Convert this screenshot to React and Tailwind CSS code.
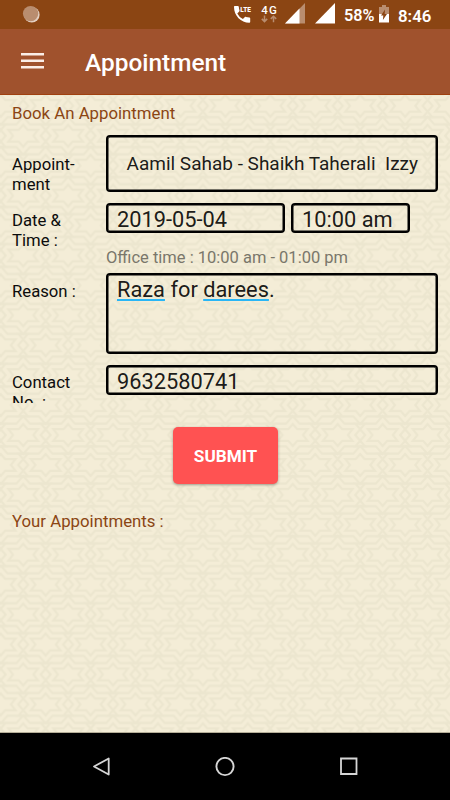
const reasonWords = [
  { text: 'Raza', misspelled: true },
  { text: ' for ' },
  { text: 'darees', misspelled: true },
  { text: '.' },
];

const outerStar = 'M0-19 6.8-11.3H27.2L17.5 0 27.2 11.3H6.8L0 19-6.8 11.3H-27.2L-17.5 0-27.2-11.3H-6.8Z';
const innerStar = 'M0-11 4.5-5.8H14.8L10.2 0 14.8 5.8H4.5L0 11-4.500 5.800H-14.800L-10.200 0-14.800-5.800H-4.500Z';

function Star({ x, y }) {
  return (
    <g transform={`translate(${x} ${y})`}>
      <path d={outerStar} />
      <path d={innerStar} />
    </g>
  );
}

function PatternBackground() {
  return (
    <svg className="absolute inset-0 h-full w-full" aria-hidden="true">
      <defs>
        <pattern id="stars" x="0.7" y="10.8" width="44.94" height="59.86" patternUnits="userSpaceOnUse">
          <g fill="none" stroke="#ece6cf" strokeWidth="2.2">
            <Star x={0} y={0} />
            <Star x={44.94} y={0} />
            <Star x={-22.47} y={29.93} />
            <Star x={22.47} y={29.93} />
            <Star x={67.41} y={29.93} />
            <Star x={0} y={59.86} />
            <Star x={44.94} y={59.86} />
          </g>
        </pattern>
      </defs>
      <rect width="100%" height="100%" fill="url(#stars)" />
    </svg>
  );
}

function StatusBar() {
  return (
    <div className="flex h-[29px] shrink-0 items-center bg-[#8b4513] pl-[22px] text-white">
      <svg className="mb-[2px] h-[18px] w-[18px] shrink-0" viewBox="0 0 18 18">
        <circle cx="9.8" cy="9.8" r="7.8" fill="#e3d0c2" />
        <circle cx="8.6" cy="8.6" r="7.7" fill="#b98d6f" />
      </svg>
      <svg className="mb-[1px] ml-[193px] h-[20px] w-[19px] shrink-0" viewBox="0 0 19 20" fill="#fff">
        <path d="M1.8 2h3.1c.5 0 .8.3.9.8.1 1.3.3 2.5.7 3.6.1.4 0 .8-.3 1L4.3 9.4a13 13 0 0 0 5.6 5.7l2-2c.3-.3.6-.4 1-.2 1.1.3 2.3.5 3.5.5.5 0 .8.4.8.9V18c0 .5-.4.8-.9.8C8 18.8 1 11.7 1 3c0-.5.3-1 .8-1z" />
        <text x="7.3" y="8" fontFamily="Roboto" fontWeight="900" fontSize="7.2" textLength="10.5" lengthAdjust="spacingAndGlyphs">LTE</text>
      </svg>
      <svg className="mb-[1px] ml-[8px] h-[22px] w-[18px] shrink-0" viewBox="0 0 18 22">
        <text x="1.3" y="10.5" fontFamily="Roboto" fontWeight="500" fontSize="11.5" textLength="15.5" fill="#fff">4G</text>
        <path d="M4.5 12.5v6M1.8 15.9l2.7 2.7 2.7-2.7M13.5 19.2v-6M10.8 15.9l2.7-2.7 2.7 2.7" fill="none" stroke="#b98d6f" strokeWidth="1.5" />
      </svg>
      <svg className="mb-[2px] ml-[7px] h-[21px] w-[20px] shrink-0" viewBox="0 0 20 21">
        <path d="M0 20.5 20 0V20.5Z" fill="#b98d6f" />
        <path d="M0 20.5 14.5 5.6V20.5Z" fill="#fff" />
      </svg>
      <svg className="mb-[2px] ml-[10px] h-[21px] w-[20px] shrink-0" viewBox="0 0 20 21">
        <path d="M0 20.5 20 0V20.5Z" fill="#fff" />
      </svg>
      <span className="mt-[3px] ml-[9px] w-[30px] text-[16.3px] leading-none font-semibold whitespace-nowrap">58%</span>
      <svg className="mb-[2px] ml-[5px] h-[18px] w-[10px] shrink-0" viewBox="0 0 10 18">
        <path d="M3 0h4v2h3v7H0V2h3z" fill="#b98d6f" />
        <path d="M0 9h10v8.5H0z" fill="#fff" />
        <path d="M6 4.5 2 10.5h2.3l-.4 4.5L8 9H5.7z" fill="#8b4513" />
      </svg>
      <span className="mt-[3px] ml-[9px] text-[16.8px] leading-none font-semibold">8:46</span>
    </div>
  );
}

function AppBar() {
  return (
    <header className="flex h-[66px] shrink-0 items-center border-b border-[#a0400f] bg-[#a0522d] pl-[21px] text-white">
      <svg className="mb-[2px] h-[16px] w-[23px]" viewBox="0 0 23 16" fill="#fbeee7">
        <path d="M0 0h23v2.6H0zM0 6.5h23v2.6H0zM0 13h23v2.6H0z" />
      </svg>
      <h1 className="mt-[3px] ml-[41px] text-[24.4px] leading-none font-medium">Appointment</h1>
    </header>
  );
}

function Label({ children, className = '' }) {
  return <div className={`w-[94px] shrink-0 text-[16.7px] leading-[20px] text-[#0c0c0c] ${className}`}>{children}</div>;
}

function Field({ children, className = '' }) {
  return (
    <div className={`flex rounded-[4px] border-2 border-black text-black/90 shadow-[inset_0_0_0_0.5px_#000] ${className}`}>
      {children}
    </div>
  );
}

function AppointmentForm() {
  return (
    <form className="pr-[12.5px] pl-[12px]">
      <h2 className="h-[40px] pt-[8px] text-[16.8px] leading-[20px] text-[#8b4513]">Book An Appointment</h2>

      <div className="flex h-[68px]">
        <Label className="pt-[20px]">Appoint-<br />ment</Label>
        <Field className="h-[57px] flex-1 items-center pt-[2px] pl-[18.5px] text-[19px] whitespace-pre">
          Aamil Sahab - Shaikh Taherali  Izzy
        </Field>
      </div>

      <div className="flex h-[44px]">
        <Label className="pt-[8px]">Date &amp;<br />Time :</Label>
        <Field className="h-[30px] w-[179px] items-center pt-[4px] pl-[9px] text-[21.8px]">2019-05-04</Field>
        <Field className="ml-[6px] h-[30px] w-[119px] items-center pt-[4px] pl-[9px] text-[21.8px]">10:00 am</Field>
      </div>

      <p className="ml-[94px] h-[26px] pt-[1px] text-[16.5px] leading-[20px] text-[#7a776b]">Office time : 10:00 am - 01:00 pm</p>

      <div className="flex h-[92px]">
        <Label className="pt-[9px]">Reason :</Label>
        <Field className="h-[81px] flex-1 pt-px pl-[9px] text-[21.8px] leading-[27px] whitespace-pre">
          {reasonWords.map((word) => (
            <span
              key={word.text}
              className={word.misspelled ? 'underline decoration-[#29b6f6] decoration-2 underline-offset-[2px] [text-decoration-skip-ink:none]' : ''}
            >
              {word.text}
            </span>
          ))}
        </Field>
      </div>

      {/* the second label line is clipped by the row height */}
      <div className="flex h-[38px] overflow-hidden">
        <Label className="pt-[8px]">Contact<br />No. :</Label>
        <Field className="h-[30px] flex-1 items-center pt-[4px] pl-[9px] text-[21.8px]">9632580741</Field>
      </div>

      <button
        type="button"
        className="mt-[24px] ml-[161px] block h-[57px] w-[105px] rounded-[5px] bg-[#ff5252] pt-[3px] text-[17.2px] font-bold text-white shadow-[0_1px_3px_rgba(0,0,0,0.35)]"
      >
        SUBMIT
      </button>
    </form>
  );
}

function NavigationBar() {
  return (
    <nav className="flex h-[67px] shrink-0 items-center justify-between bg-black pr-[92px] pl-[92px]">
      <svg className="h-5 w-5" viewBox="0 0 20 20" fill="none" stroke="#d6d6d6" strokeWidth="1.8">
        <path d="M16.7 1.5v16L2 9.5z" strokeLinejoin="round" />
      </svg>
      <svg className="h-5 w-5" viewBox="0 0 20 20" fill="none" stroke="#d6d6d6" strokeWidth="1.9">
        <circle cx="10" cy="9.5" r="8.6" />
      </svg>
      <svg className="h-5 w-5" viewBox="0 0 20 20" fill="none" stroke="#d6d6d6" strokeWidth="1.8">
        <path d="M3 1.5h15.5v15.5H3z" />
      </svg>
    </nav>
  );
}

export default function App() {
  return (
    <div className="flex h-[800px] w-[450px] flex-col overflow-hidden font-[Roboto,sans-serif]">
      <StatusBar />
      <AppBar />
      <main className="relative flex-1 border-b border-[#b5ae98] bg-[#f4edd7]">
        <PatternBackground />
        <div className="relative">
          <AppointmentForm />
          <h2 className="mt-[27px] pl-[12px] text-[16.8px] leading-[20px] text-[#8b4513]">Your Appointments :</h2>
        </div>
      </main>
      <NavigationBar />
    </div>
  );
}
